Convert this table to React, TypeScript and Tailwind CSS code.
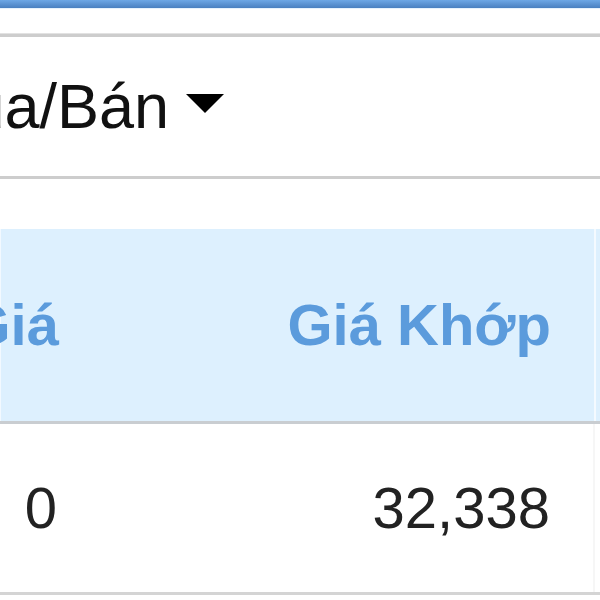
export default function App() {
  const font = { fontFamily: '"Liberation Sans", Arial, sans-serif' };
  return (
    <div className="w-[600px] h-[600px] overflow-hidden bg-white" style={font}>
      <div className="h-[8px] bg-gradient-to-b from-[#6ea8e6] to-[#4a80c0]" />
      <div className="h-[1px] bg-[#e6f2fc]" />
      <div className="h-[24px]" />
      <div className="h-[4px] bg-[#cdcdcd] border-t border-[#e2e2e2]" />
      <div className="h-[139px] flex items-center">
        <div className="flex items-center ml-[-83px] whitespace-nowrap">
          <span className="text-[63px] leading-none text-[#111]">Mua/Bán</span>
          <svg width="38" height="20" viewBox="0 0 38 20" className="ml-[17px] mt-[-5px]">
            <path d="M0 0 H38 L19 19 Z" fill="#000" />
          </svg>
        </div>
      </div>
      <div className="h-[3px] bg-[#cdcdcd]" />
      <div className="h-[50px]" />
      <div className="flex h-[192px] bg-[#ddf0fe] border-l border-[#f2f9ff]">
        <div className="w-[99px] flex items-center justify-end pr-[41px] overflow-visible">
          <span className="text-[58px] leading-none font-bold text-[#5b9bdc] whitespace-nowrap">Giá</span>
        </div>
        <div className="w-[494px] flex items-center justify-end pr-[43px]">
          <span className="text-[58px] leading-none font-bold text-[#5b9bdc] whitespace-nowrap">Giá Khớp</span>
        </div>
        <div className="w-[2px] bg-[#f4faff]" />
        <div className="flex-1" />
      </div>
      <div className="h-[3px] bg-[#c9cdd1]" />
      <div className="flex h-[168px] bg-white">
        <div className="w-[100px] flex items-center justify-end pr-[43px]">
          <span className="text-[58px] leading-none text-[#222]">0</span>
        </div>
        <div className="w-[493px] flex items-center justify-end pr-[43px]">
          <span className="text-[58px] leading-none text-[#222]">32,338</span>
        </div>
        <div className="w-[2px] bg-[#f6f6f6]" />
        <div className="flex-1" />
      </div>
      <div className="h-[3px] bg-[#d4d4d4]" />
    </div>
  );
}
